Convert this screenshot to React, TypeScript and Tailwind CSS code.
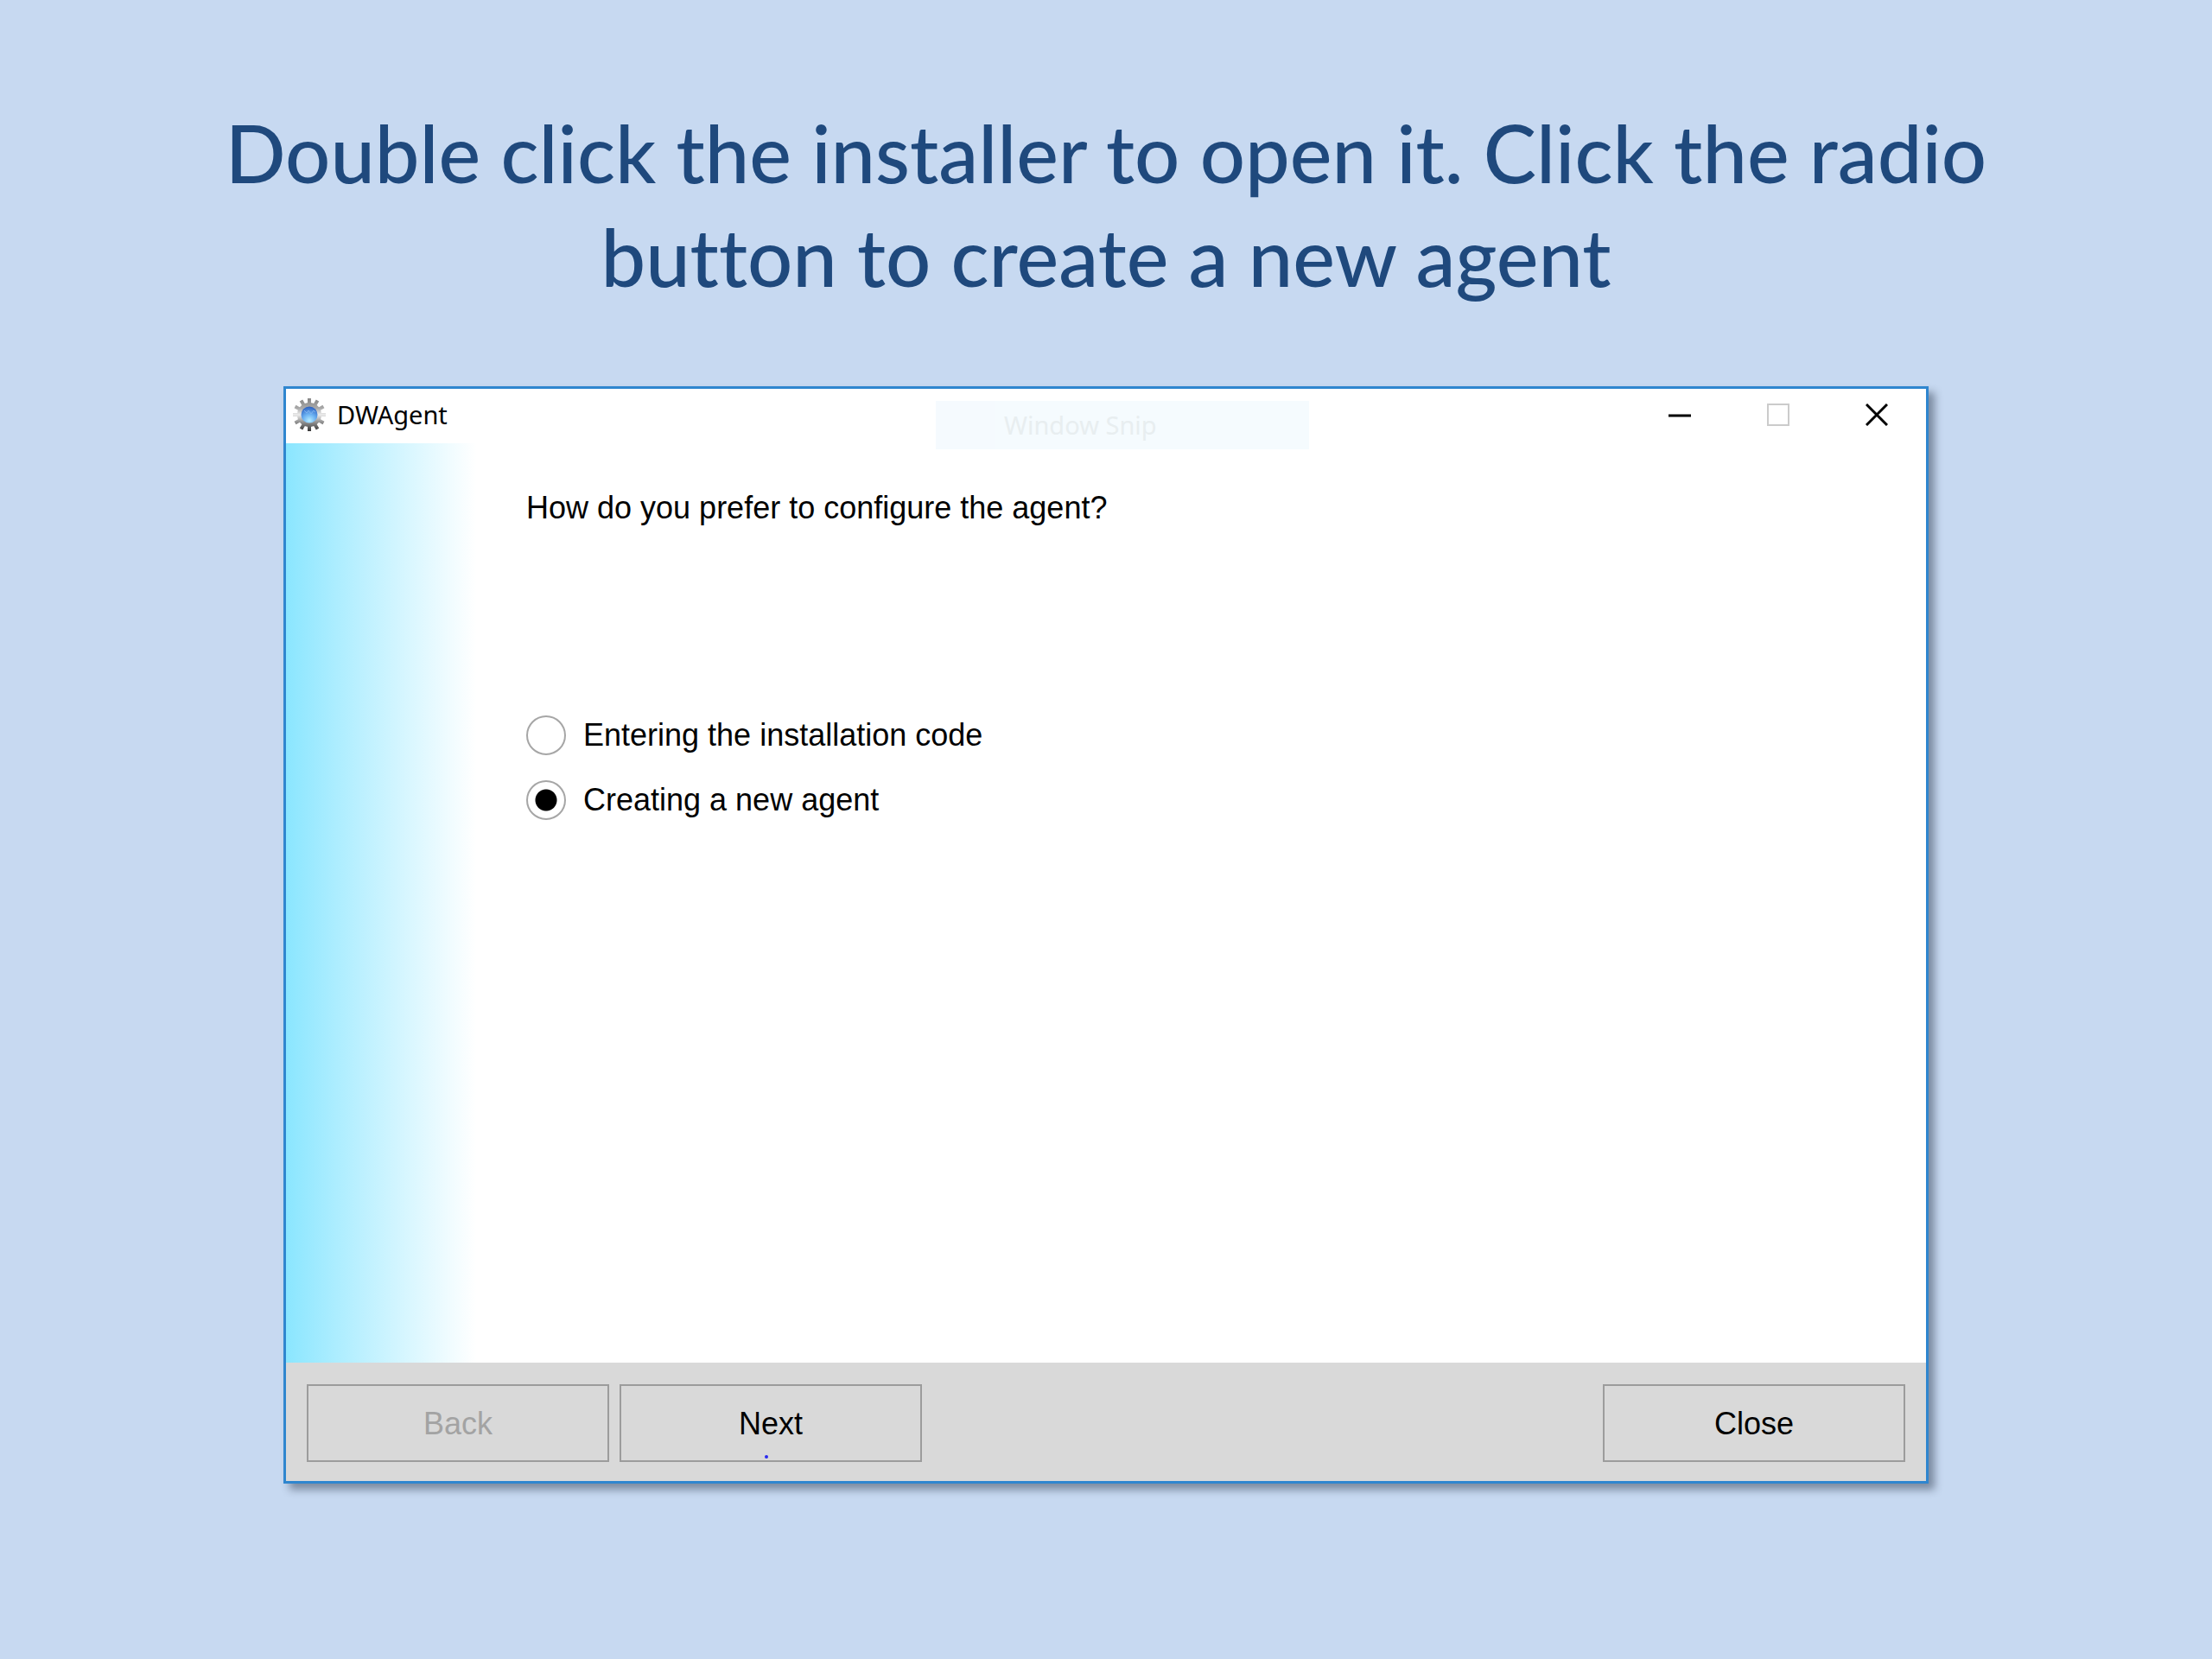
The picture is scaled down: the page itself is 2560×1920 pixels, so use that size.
import React, { useState } from 'react';

const options = [
  { value: 'code', label: 'Entering the installation code' },
  { value: 'new', label: 'Creating a new agent' },
];

const teeth = [0, 30, 60, 90, 120, 150, 180, 210, 240, 270, 300, 330];

const buttonClass =
  'w-[350px] h-[90px] border-2 border-[#9c9c9c] bg-[#d9d9d9] pt-[2px] text-[36px] leading-[40px]';

function GearIcon() {
  return (
    <svg viewBox="0 0 40 40" className="h-10 w-10" aria-hidden="true">
      <defs>
        <linearGradient id="gear" gradientUnits="userSpaceOnUse" x1="0" y1="1" x2="0" y2="39">
          <stop offset="0" stopColor="#858585" />
          <stop offset="0.3" stopColor="#a9a9a9" />
          <stop offset="0.5" stopColor="#ededed" />
          <stop offset="0.7" stopColor="#9a9a9a" />
          <stop offset="1" stopColor="#333333" />
        </linearGradient>
        <radialGradient id="globe" cx="0.5" cy="0.85" r="0.85">
          <stop offset="0" stopColor="#b5ecff" />
          <stop offset="0.45" stopColor="#6cb2f2" />
          <stop offset="1" stopColor="#2a5fc0" />
        </radialGradient>
      </defs>
      <circle cx="20" cy="20" r="14" fill="url(#gear)" />
      <g stroke="url(#gear)" strokeWidth="4">
        {teeth.map((angle) => {
          const a = ((angle + 0.1) * Math.PI) / 180;
          return (
            <line
              key={angle}
              x1={20 + 12 * Math.sin(a)}
              y1={20 + 12 * Math.cos(a)}
              x2={20 + 19 * Math.sin(a)}
              y2={20 + 19 * Math.cos(a)}
            />
          );
        })}
      </g>
      <circle cx="20" cy="20" r="9.5" fill="url(#globe)" />
      <path d="M14 15l3 3 2-3 3 4 3-4 2 2" fill="none" stroke="#7fb2ee" strokeWidth="1" />
    </svg>
  );
}

function TitleBar() {
  return (
    <header className="relative flex h-[63px] items-center justify-between bg-white pb-1">
      <div className="flex items-center gap-3 pl-[7px] font-['Noto_Sans','Open_Sans',sans-serif]">
        <GearIcon />
        <span className="text-[29px] leading-[40px] text-black">DWAgent</span>
      </div>

      <div className="flex h-full">
        <button type="button" aria-label="Minimize" className="flex w-[114px] items-center justify-center">
          <svg viewBox="0 0 26 26" className="h-[26px] w-[26px]" stroke="#000" strokeWidth="3">
            <path d="M0 14h26" />
          </svg>
        </button>
        <button
          type="button"
          aria-label="Maximize"
          disabled
          className="flex w-[114px] items-center justify-center"
        >
          <svg viewBox="0 0 26 26" className="h-[26px] w-[26px]" fill="none" stroke="#cbcbcb" strokeWidth="2">
            <rect x="1" y="1" width="24" height="24" />
          </svg>
        </button>
        <button type="button" aria-label="Close window" className="flex w-[114px] items-center justify-center">
          <svg viewBox="0 0 26 26" className="h-[26px] w-[26px]" stroke="#000" strokeWidth="3">
            <path d="M1 1l24 24M25 1L1 25" />
          </svg>
        </button>
      </div>

      {/* leftover hint from the snipping tool */}
      <div className="absolute left-[752px] top-[14px] flex h-14 w-[432px] bg-[#f5fbfe] font-['Noto_Sans','Open_Sans',sans-serif]">
        <div className="w-[69px] bg-[#f5fafe]" />
        <span className="pl-[10px] text-[29px] leading-[56px] text-[#e8eef0]">Window Snip</span>
      </div>
    </header>
  );
}

export default function App() {
  const [choice, setChoice] = useState('new');

  return (
    <main className="flex min-h-screen flex-col bg-[#c7d9f1] px-[328px] pt-[117px] pb-[203px] font-['Liberation_Sans',Arial,sans-serif]">
      <h1 className="-mx-[120px] text-center font-['Lato','Open_Sans',sans-serif] text-[92px] font-medium leading-[120px] text-[#1f497d] [font-variant-ligatures:none]">
        Double click the installer to open it. Click the radio
        <br />
        button to create a new agent
      </h1>

      <section className="mt-[90px] flex flex-1 flex-col border-[3px] border-[#2f86cf] bg-white shadow-[7px_7px_9px_rgba(20,30,50,0.42)]">
        <TitleBar />

        <div className="flex flex-1">
          <div className="w-[278px] bg-linear-to-r from-[#8ae6ff] to-white to-[220px]" />
          <fieldset className="pt-[55px] text-[36px] leading-[40px] text-black">
            <legend className="float-left">How do you prefer to configure the agent?</legend>
            <div className="clear-both flex flex-col gap-[29px] pt-[220px]">
              {options.map((option) => (
                <label key={option.value} className="flex items-center gap-5">
                  <input
                    type="radio"
                    name="configure"
                    value={option.value}
                    checked={choice === option.value}
                    onChange={() => setChoice(option.value)}
                    className="h-[46px] w-[46px] appearance-none rounded-full border-2 border-[#a6a6a6] bg-white checked:bg-[radial-gradient(circle,#000_12px,transparent_13px)]"
                  />
                  {option.label}
                </label>
              ))}
            </div>
          </fieldset>
        </div>

        <footer className="flex items-center gap-3 bg-[#d9d9d9] px-6 pt-[25px] pb-[22px]">
          <button type="button" disabled className={`${buttonClass} text-[#a3a3a3]`}>
            Back
          </button>
          <button type="button" className={`${buttonClass} relative text-black`}>
            Next
            <span className="absolute bottom-[2px] left-[166px] h-1 w-1 rounded-full bg-[#2a2af0]" />
          </button>
          <button type="button" className={`${buttonClass} ml-auto text-black`}>
            Close
          </button>
        </footer>
      </section>
    </main>
  );
}
